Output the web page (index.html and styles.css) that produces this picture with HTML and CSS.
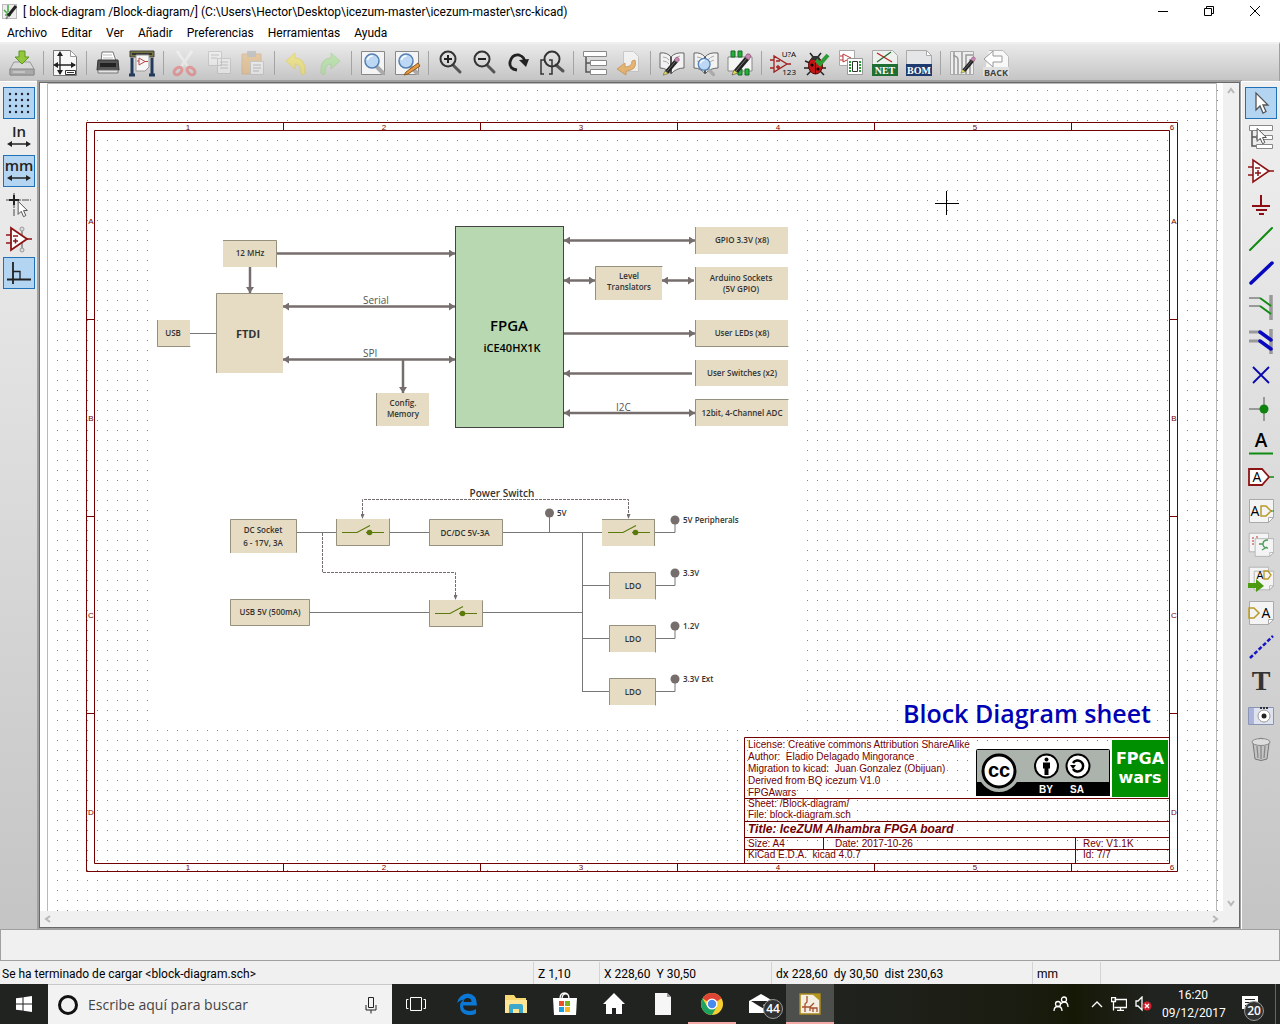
FILE: index.html
```html
<!DOCTYPE html>
<html lang="es">
<head>
<meta charset="utf-8">
<title>[ block-diagram /Block-diagram/]</title>
<meta name="viewport" content="width=device-width, initial-scale=1">
<link rel="stylesheet" href="styles.css">
</head>
<body>
<svg class="defs" aria-hidden="true">
  <defs>
    <symbol id="pencil" viewBox="0 0 26 26"><path d="M7 20 18 7l4 3L11 23z" fill="#222"/><path d="m9 21 11-13" stroke="#777" stroke-width="1"/><path d="m7 20 4 3-6 2z" fill="#e8e050" stroke="#444" stroke-width=".6"/><path d="m18 7 2-3q3-1 4 2l-2 4z" fill="#c986b8" stroke="#745" stroke-width=".6"/></symbol>
    <symbol id="sheet" viewBox="0 0 26 26"><path d="M1.500 1.500h24v18l-5 5h-19z" fill="#f4f4f4" stroke="#aaa"/><path d="M20.500 24.500v-5h5z" fill="#fff" stroke="#aaa"/></symbol>
    <symbol id="arrow" viewBox="0 0 26 26"><path d="M8 3v17l4-4 3 7 3-1.500-3-6.500h5z" fill="#fff" stroke="#555" stroke-width="1.300"/></symbol>
    <symbol id="lens" viewBox="0 0 26 26"><path d="m17 17 6 6" stroke="#aaa" stroke-width="4" stroke-linecap="round"/><circle cx="12" cy="11" r="7" fill="#bcd8f4" stroke="#5580b4" stroke-width="1.500"/><path d="M7.500 10q1-4 5-4" fill="none" stroke="#fff" stroke-width="1.500"/></symbol>
    <symbol id="book" viewBox="0 0 26 26"><path d="M1 3q7-1 11 4 4-5 13-4v15q-8 0-13 6Q8 18 1 18z" fill="#f2f2f2" stroke="#666"/><path d="M12 7v16" stroke="#555" stroke-width="2"/><path d="M4 7q4 0 6 3M4 11q4 0 6 3M21 6q-4 1-6 4M21 10q-4 1-6 4" fill="none" stroke="#aaa"/></symbol>
    <symbol id="span" viewBox="0 0 26 26"><path d="M4 20h18" stroke="#222" stroke-width="1.500"/><path d="m1 20 5-3v6zM25 20l-5-3v6z" fill="#222"/></symbol>
    <symbol id="switch" viewBox="0 0 54 27"><path d="M6 13.500h15l13-7M30 13.500h18" fill="none" stroke="#5c7a0c" stroke-width="1.200"/><circle cx="33.500" cy="13.500" r="2.800" fill="#5c7a0c"/></symbol>
    <marker id="tip" markerUnits="userSpaceOnUse" markerWidth="6" markerHeight="8" refX="6" refY="4" orient="auto-start-reverse"><path d="M0 0l6 4-6 4z" fill="#766e6c"/></marker>
    <marker id="tip-small" markerUnits="userSpaceOnUse" markerWidth="5" markerHeight="4" refX="4" refY="2" orient="auto"><path d="M0 0l5 2-5 2z" fill="#766e6c"/></marker>
    <pattern id="grid" x="2" y="5" width="10" height="10" patternUnits="userSpaceOnUse"><rect x="5" y="5" width="1" height="1" fill="#848484"/></pattern>
  </defs>
</svg>

<header class="titlebar">
  <svg class="app-icon" viewBox="0 0 16 16" aria-hidden="true"><rect x=".5" y=".5" width="14" height="14" fill="#eee" stroke="#bbb"/><path d="M2 6l4 4M6 1v7M3 11h6" stroke="#4a4" stroke-width="1.500"/><path d="M6 12 14 2" stroke="#222" stroke-width="3"/><path d="m6 12-2 3" stroke="#888" stroke-width="2"/></svg>
  <h1>[ block-diagram /Block-diagram/] (C:\Users\Hector\Desktop\icezum-master\icezum-master\src-kicad)</h1>
  <div class="window-buttons">
    <button aria-label="Minimizar"><svg viewBox="0 0 10 10"><path d="M0 5.500h10" stroke="#000"/></svg></button>
    <button aria-label="Restaurar"><svg viewBox="0 0 10 10"><path d="M.5 2.500h7v7h-7zM2.500 2.500v-2h7v7h-2" fill="none" stroke="#000"/></svg></button>
    <button aria-label="Cerrar"><svg viewBox="0 0 10 10"><path d="m0 0 10 10M10 0 0 10" stroke="#000"/></svg></button>
  </div>
</header>

<nav class="menubar">
  <button>Archivo</button><button>Editar</button><button>Ver</button><button>Añadir</button><button>Preferencias</button><button>Herramientas</button><button>Ayuda</button>
</nav>

<div class="toolbar" role="toolbar" aria-label="Principal">
  <button aria-label="Guardar"><svg viewBox="0 0 26 26"><path d="M5 12h16l4 7v6H1v-6z" fill="#d8d8d8" stroke="#999"/><path d="M1 19h24v6H1z" fill="#aaa" stroke="#888"/><path d="M4 22h12" stroke="#ddd"/><path d="M10 1h6v6h4l-7 7-7-7h4z" fill="#94c83c" stroke="#5d9420"/></svg></button>
  <i></i>
  <button aria-label="Ajustes de hoja"><svg viewBox="0 0 26 26"><path d="M1.500.5h17l6 6v19h-23z" fill="#f8f8f8" stroke="#777"/><path d="M18.500.5v6h6z" fill="#fff" stroke="#999"/><path d="M8 3v21M3 15h20" stroke="#222" stroke-width="1.300"/><path d="m8 1-3 5h6zM8 25l-3-5h6zM1 15l5-3v6zM24 15l-5-3v6z" fill="#222"/><path d="M13.500 20.500h10v4h-10zM15 22.500h7" fill="#fff" stroke="#333"/></svg></button>
  <i></i>
  <button aria-label="Imprimir"><svg viewBox="0 0 26 26"><path d="M7 2h11l3 9H6z" fill="#fff" stroke="#777"/><path d="M8 5h9M8 8h10" stroke="#bbb"/><path d="M3 10h20l1 10H2z" fill="#555" stroke="#333"/><path d="M5 13h16v4H5z" fill="#222"/><path d="M3 20h20v3H3z" fill="#e4e4e4" stroke="#777"/></svg></button>
  <button aria-label="Trazar"><svg viewBox="0 0 26 26"><path d="M1 1h24v6H1z" fill="#77763f" stroke="#444"/><path d="M3 4h20" stroke="#333" stroke-width="2"/><path d="M3 8v17M23 8v17M0 25h6M20 25h6" stroke="#243a5c" stroke-width="3"/><path d="M7 5h13v12l-4 4H7z" fill="#f6f6f6" stroke="#999"/><path d="M10 8v7l6-3.500zM8 11h2M16 11.500h3" fill="none" stroke="#b44"/></svg></button>
  <i></i>
  <button disabled aria-label="Cortar"><svg viewBox="0 0 26 26"><path d="m5 1 11 16M20 1 9 17" stroke="#fff" stroke-width="3"/><ellipse cx="6" cy="21" rx="4.500" ry="3" transform="rotate(-40 6 21)" fill="none" stroke="#f04848" stroke-width="3"/><ellipse cx="19" cy="21" rx="4.500" ry="3" transform="rotate(40 19 21)" fill="none" stroke="#f04848" stroke-width="3"/></svg></button>
  <button disabled aria-label="Copiar"><svg viewBox="0 0 26 26"><path d="M2.500 1.500h13v14h-13zM11.500 8.500h13v15h-13z" fill="#fff" stroke="#aaa"/><path d="M5 5h8M5 8h6M14 12h8M14 15h8M14 18h8" stroke="#999"/></svg></button>
  <button disabled aria-label="Pegar"><svg viewBox="0 0 26 26"><path d="M2 4h19v20H2z" fill="#eda84a" stroke="#c48d4c"/><path d="M7 1h9v6H7z" fill="#999"/><path d="M10.500 11.500h13v13h-13z" fill="#fff" stroke="#aaa"/><path d="M13 15h8M13 18h8M13 21h6" stroke="#888"/></svg></button>
  <i></i>
  <button disabled aria-label="Deshacer"><svg viewBox="0 0 26 26"><path d="m3 11 9-8v5q11 0 10 15-4 4-4-1 0-8-6-8v5z" fill="#ffe820" stroke="#e8c800"/></svg></button>
  <button disabled aria-label="Rehacer"><svg viewBox="0 0 26 26"><path d="m23 11-9-8v5Q3 8 4 23q4 4 4-1 0-8 6-8v5z" fill="#90e870" stroke="#80c860"/></svg></button>
  <i></i>
  <button aria-label="Buscar"><svg viewBox="0 0 26 26"><path d="M1.500 1.500h23v23h-23z" fill="#f4f4f4" stroke="#888"/><use href="#lens" width="26" height="26"/></svg></button>
  <button aria-label="Buscar y reemplazar"><svg viewBox="0 0 26 26"><path d="M1.500 1.500h23v23h-23z" fill="#f4f4f4" stroke="#888"/><use href="#lens" width="26" height="26"/><path d="m24 13-12 9-2 3 4-1 12-8z" fill="#e89a40" stroke="#8a5520"/></svg></button>
  <i></i>
  <button aria-label="Acercar"><svg viewBox="0 0 26 26"><path d="m16 15 7 7" stroke="#555" stroke-width="3" stroke-linecap="round"/><circle cx="11" cy="9" r="7.500" fill="none" stroke="#333" stroke-width="2"/><path d="M7 9h8M11 5v8" stroke="#222" stroke-width="2"/></svg></button>
  <button aria-label="Alejar"><svg viewBox="0 0 26 26"><path d="m16 15 7 7" stroke="#555" stroke-width="3" stroke-linecap="round"/><circle cx="11" cy="9" r="7.500" fill="none" stroke="#333" stroke-width="2"/><path d="M7 9h8" stroke="#222" stroke-width="2"/></svg></button>
  <button aria-label="Redibujar"><svg viewBox="0 0 26 26"><path d="M12 20q-8-1-7-8 2-8 9-7 6 2 6 8" fill="none" stroke="#222" stroke-width="2.800"/><path d="m14 10 10-1-3 8z" fill="#222"/></svg></button>
  <button aria-label="Ajustar"><svg viewBox="0 0 26 26"><path d="m17 15 7 6" stroke="#555" stroke-width="3" stroke-linecap="round"/><circle cx="13" cy="9" r="7.500" fill="none" stroke="#333" stroke-width="2"/><path d="M5 10H2v14h3M10 10h3v14h-3" fill="none" stroke="#333" stroke-width="1.500"/></svg></button>
  <i></i>
  <button aria-label="Jerarquía"><svg viewBox="0 0 26 26"><path d="M4 5v17h4M4 13h4" fill="none" stroke="#555" stroke-width="1.500"/><path d="M1.500 1.500h23v5h-23zM8.500 10.500h16v5h-16zM8.500 19.500h16v5h-16z" fill="#fff" stroke="#888"/></svg></button>
  <button aria-label="Salir de hoja"><svg viewBox="0 0 26 26" opacity=".6"><path d="M7.500 1.500h10l5 5v15h-15z" fill="#fff" stroke="#bbb"/><path d="M19 10q3 10-9 11v4L1 19l8-6v4q7 0 7-6z" fill="#f0a030" stroke="#c87820"/></svg></button>
  <i></i>
  <button aria-label="Editor de bibliotecas"><svg viewBox="0 0 26 26"><use href="#book" width="26" height="26"/><use href="#pencil" width="22" height="24" y="3"/></svg></button>
  <button aria-label="Navegador de bibliotecas"><svg viewBox="0 0 26 26"><use href="#book" width="26" height="26"/><use href="#lens" x="1" y="5" width="22" height="22"/></svg></button>
  <button aria-label="Editor de huellas"><svg viewBox="0 0 26 26"><path d="M1 7h24v14H1z" fill="#f4f4f4" stroke="#888"/><path d="M4 1h4v6H4zM11 1h4v6h-4zM11 19h4v6h-4zM18 19h4v6h-4z" fill="#22b036" stroke="#186a28"/><use href="#pencil" width="26" height="26"/></svg></button>
  <i></i>
  <button aria-label="Anotar"><svg viewBox="0 0 26 26"><path d="M4 6v16l13-8zM0 10h4M0 18h4M17 14h4M6 11h4M6 17h4M8 15v4" fill="none" stroke="#a22020" stroke-width="1.300"/><text x="26" y="7" class="glyph">U?A</text><text x="26" y="25" class="glyph">123</text></svg></button>
  <button aria-label="ERC"><svg viewBox="0 0 26 26"><path d="m6 3 4 5M17 3l-4 5M1 11l5 2M0 18h6M3 25l4-4M22 18h-5M20 25l-4-4" stroke="#222" stroke-width="1.500"/><ellipse cx="11.500" cy="15.500" rx="7" ry="8.500" fill="#c41414" stroke="#500"/><path d="M8 6h7l1 4H7z" fill="#333"/><path d="M11.500 10v14" stroke="#400"/><circle cx="8" cy="15" r="1.500"/><circle cx="14" cy="19" r="1.500"/><path d="m12 10 4 4 8-9" fill="none" stroke="#2e9a38" stroke-width="4"/></svg></button>
  <button aria-label="Asociar huellas"><svg viewBox="0 0 26 26"><path d="M1.500.5h15v15h-15z" fill="#fff" stroke="#aaa"/><path d="M5 4v8l8-4zM2 6h3M2 10h3" fill="none" stroke="#b33"/><path d="M9.500 8.500h15v16h-15z" fill="#fff" stroke="#999"/><path d="M14.500 11.500h5v10h-5z" fill="none" stroke="#333"/><path d="M12 11v12M22 11v12" stroke="#22a036" stroke-width="2" stroke-dasharray="2 1"/></svg></button>
  <button aria-label="Lista de redes"><svg viewBox="0 0 26 26"><path d="M.5.5h20l5 5v20H.5z" fill="#eef2ee" stroke="#aaa"/><path d="M5 3 20 12" stroke="#b22" stroke-width="1.300"/><path d="M5 12 19 2" stroke="#2a6a30" stroke-width="1.300"/><path d="M0 14h26v12H0z" fill="#1f6f33"/><text x="13" y="24" class="glyph-slab">NET</text></svg></button>
  <button aria-label="Lista de materiales"><svg viewBox="0 0 26 26"><path d="M.5.5h20l5 5v20H.5z" fill="#e4e6e8" stroke="#aaa"/><path d="M20.500.5v5h5z" fill="#fff" stroke="#aaa"/><path d="M0 14h26v12H0z" fill="#1d3b6e"/><text x="13" y="24" class="glyph-slab">BOM</text></svg></button>
  <i></i>
  <button aria-label="Editor de placas"><svg viewBox="0 0 26 26"><path d="M1.500 1.500h23v23h-23z" fill="#eee" stroke="#aaa"/><path d="M5 2v22M9 24V10q0-4-5-4M13 2v18M17 24V5h7M21 24V9" fill="none" stroke="#999" stroke-width="1.500"/><use href="#pencil" x="8" y="4" width="20" height="20"/></svg></button>
  <button aria-label="Volver"><svg viewBox="0 0 26 26"><path d="M6 .5h14l5.500 6v19H1" fill="#f8f8f8" stroke="#bbb"/><path d="m1 9 9-8v5h9v6h-9v5z" fill="#fff" stroke="#999"/><path d="M0 17h26v9H0z" fill="#e0e0e0"/><text x="13" y="26" class="glyph-back">BACK</text></svg></button>
</div>

<main class="workspace">
  <div class="sidebar" role="toolbar" aria-label="Opciones">
    <button class="on" aria-label="Rejilla"><svg viewBox="0 0 26 26"><path d="M4 4h20M4 10h20M4 16h20M4 22h20" stroke="#223" stroke-width="2.400" stroke-linecap="round" stroke-dasharray="0 6"/></svg></button>
    <button aria-label="Pulgadas"><svg viewBox="0 0 26 26"><text x="13" y="13" class="glyph-unit">In</text><use href="#span" width="26" height="26"/></svg></button>
    <button class="on" aria-label="Milímetros"><svg viewBox="0 0 26 26"><text x="13" y="13" class="glyph-unit">mm</text><use href="#span" width="26" height="26"/></svg></button>
    <button aria-label="Cursor"><svg viewBox="0 0 26 26"><path d="M8 1v24M0 8h25" stroke="#999" stroke-width="2" stroke-dasharray="7 1"/><path d="M8 3v10M3 8h10" stroke="#222" stroke-width="2"/><use href="#arrow" x="6" y="7" width="20" height="20"/></svg></button>
    <button aria-label="Pines ocultos"><svg viewBox="0 0 26 26"><path d="M16 3v21" stroke="#999" stroke-width="2"/><path d="M5 2v22l16-11z" fill="#fff" stroke="#8c1414" stroke-width="1.800"/><path d="M0 9h5M0 17h5M21 13h5M7 10h5M7 15h5M9.500 12.500v5" stroke="#8c1414" stroke-width="1.500"/><circle cx="16" cy="3" r="2" fill="#ddd" stroke="#999"/><circle cx="16" cy="24" r="2" fill="#ddd" stroke="#999"/></svg></button>
    <button class="on" aria-label="Ortogonal"><svg viewBox="0 0 26 26"><path d="M7 2v22M1 19.500h24" stroke="#222" stroke-width="1.800"/><path d="M7 11.500h7v8" fill="none" stroke="#222" stroke-width="1.300"/></svg></button>
  </div>

  <div class="viewport">
    <svg class="sheet" role="img" aria-label="Block Diagram sheet">
      <g transform="translate(-40 -83)">
        <rect x="52" y="88" width="4000" height="4000" fill="url(#grid)"/>
        <path d="M47.500 911V83.500H1216.500V911" class="page-edge"/>
        <rect x="150" y="215" width="655" height="507" fill="#fff"/>

        <g class="frame">
          <path d="M86.500 122.500h1091v749h-1091zM94.500 130.500h1075v733h-1075z"/>
          <path d="M283.500 123v7M480.500 123v7M677.500 123v7M874.500 123v7M1071.500 123v7M283.500 864v7M480.500 864v7M677.500 864v7M874.500 864v7M1071.500 864v7M87 319.500h7M87 516.500h7M87 713.500h7M1170 319.500h7M1170 516.500h7M1170 713.500h7"/>
          <path d="M744.500 863.500v-126h425M744.500 798.500h425M744.500 821.500h425M744.500 837.500h425M744.500 849.500h425M823.500 838v11M1075.500 838v25"/>
        </g>
        <g class="frame-text mid small">
          <text x="188" y="130">1</text><text x="384" y="130">2</text><text x="581" y="130">3</text><text x="778" y="130">4</text><text x="975" y="130">5</text><text x="1172" y="130">6</text>
          <text x="188" y="870">1</text><text x="384" y="870">2</text><text x="581" y="870">3</text><text x="778" y="870">4</text><text x="975" y="870">5</text><text x="1172" y="870">6</text>
          <text x="91" y="224">A</text><text x="91" y="421">B</text><text x="91" y="618">C</text><text x="91" y="815">D</text>
          <text x="1174" y="224">A</text><text x="1174" y="421">B</text><text x="1174" y="618">C</text><text x="1174" y="815">D</text>
        </g>
        <g class="frame-text">
          <text x="748" y="748">License: Creative commons Attribution ShareAlike</text>
          <text x="748" y="760">Author:&#160; Eladio Delagado Mingorance</text>
          <text x="748" y="772">Migration to kicad:&#160; Juan Gonzalez (Obijuan)</text>
          <text x="748" y="784">Derived from BQ icezum V1.0</text>
          <text x="748" y="796">FPGAwars</text>
          <text x="748" y="807">Sheet: /Block-diagram/</text>
          <text x="748" y="818">File: block-diagram.sch</text>
          <text x="748" y="833" class="sheet-title">Title: IceZUM Alhambra FPGA board</text>
          <text x="748" y="847">Size: A4</text>
          <text x="835" y="847">Date: 2017-10-26</text>
          <text x="1083" y="847">Rev: V1.1K</text>
          <text x="748" y="858">KiCad E.D.A.&#160; kicad 4.0.7</text>
          <text x="1083" y="858">Id: 7/7</text>
        </g>
        <text x="1027" y="723" class="sheet-name">Block Diagram sheet</text>

        <g>
          <rect x="976.500" y="749.500" width="133" height="46" rx="1" fill="#abb3ac" stroke="#000"/>
          <path d="M976 782h134v14H976z"/>
          <circle cx="999" cy="771" r="21" fill="#abb3ac"/>
          <path d="M976 792h46v4h-46z"/>
          <circle cx="999" cy="771" r="16" fill="#fff" stroke="#000" stroke-width="3"/>
          <text x="999" y="777" class="cc">cc</text>
          <circle cx="1046.500" cy="766" r="11.500" fill="#fff" stroke="#000" stroke-width="2"/>
          <circle cx="1046.500" cy="759.500" r="2"/><path d="M1043 762.500h7v6h-1.500v6.500h-4v-6.500h-1.500z"/>
          <circle cx="1078" cy="766" r="11.500" fill="#fff" stroke="#000" stroke-width="2"/>
          <path d="M1073 763a5.500 5.500 0 1 1 0 6" fill="none" stroke="#000" stroke-width="2.500"/><path d="m1070 765 6 0-3 4z"/>
          <text x="1046" y="793" class="cc-label">BY</text><text x="1077" y="793" class="cc-label">SA</text>
          <path d="M1112 740h56v57h-56z" fill="#008f00"/>
          <text x="1140" y="764" class="wars">FPGA</text><text x="1140" y="783" class="wars">wars</text>
        </g>

        <g class="block">
          <path d="M223 240h54v27h-54zM216 293h67v80h-67zM157 320h33v27h-33zM376 393h53v33h-53zM695 227h93v27h-93zM595 266h67v34h-67zM695 267h93v33h-93zM695 320h93v27h-93zM695 360h93v26h-93zM695 399h93v27h-93z"/>
          <path d="M230 519h67v34h-67zM336 519h54v27h-54zM429 519h74v27h-74zM602 519h53v27h-53zM609 572h47v27h-47zM609 625h47v27h-47zM609 678h47v27h-47zM230 599h80v27h-80zM429 600h54v27h-54z"/>
        </g>
        <path class="edges" d="M223 240.500h53.500v27M216.500 373v-79.500h66.500M157.500 320v26.500h33M376.500 426v-33M695.500 254v-27M595.500 300v-33.500h67M695.500 300v-33M695.500 320v26.500h93M695.500 360v26M695.500 426v-26.500h93M230.500 553v-33.500h66v33M336.500 519v26.500h53v-27M429.500 546v-26.500h73v26h-73M602 519.500h53M654.500 519v27M609.500 599v-26.500h46v27M609.500 652v-26.500h46v27M609.500 705v-26.500h46v27M230.500 599.500h79v26h-79zM429.500 600v26.500h53v-26"/>
        <rect x="455.500" y="226.500" width="108" height="201" fill="#b7d8b1" stroke="#444"/>

        <g class="wire thick">
          <path d="M277 253.500H455" marker-end="url(#tip)"/>
          <path d="M250 267V293" marker-end="url(#tip)"/>
          <path class="both" d="M283 306.500H455"/>
          <path class="both" d="M283 359.500H455"/>
          <path d="M403 360V393" marker-end="url(#tip)"/>
          <path class="both" d="M564 240.500H695"/>
          <path class="both" d="M564 280.500H595"/>
          <path class="both" d="M662 280.500H694"/>
          <path d="M564 333.500H695" marker-end="url(#tip)"/>
          <path d="M692 373.500H564" marker-end="url(#tip)"/>
          <path class="both" d="M564 413H695"/>
        </g>
        <path class="wire" d="M190 333.500h26M297 532.500h39M390 532.500h39M503 532.500h99M549.500 513v19M582.500 533v159M655 532.500h20v-13M582 585.500h27M656 585.500h19v-13M582 638.500h27M656 638.500h19v-13M582 691.500h27M656 691.500h19v-13M310 612.500h119M483 612.500h99"/>
        <g fill="#766e6c"><circle cx="549.500" cy="513" r="4.500"/><circle cx="675" cy="520" r="4.500"/><circle cx="675" cy="573" r="4.500"/><circle cx="675" cy="626" r="4.500"/><circle cx="675" cy="679" r="4.500"/></g>
        <g class="wire dashed">
          <path d="M495 499.500H362.500V518" marker-end="url(#tip-small)"/><path d="M495 499.500H628.500V518" marker-end="url(#tip-small)"/>
          <path d="M322.500 533v39.500h133V599" marker-end="url(#tip-small)"/>
        </g>
        <use href="#switch" x="336" y="519" width="54" height="27"/><use href="#switch" x="602" y="519" width="54" height="27"/><use href="#switch" x="429" y="600" width="54" height="27"/>

        <g class="label mid">
          <text x="250" y="256">12 MHz</text><text x="173" y="336">USB</text>
          <text x="403" y="406">Config.</text><text x="403" y="417">Memory</text>
          <text x="742" y="243">GPIO 3.3V (x8)</text>
          <text x="629" y="279">Level</text><text x="629" y="290">Translators</text>
          <text x="741" y="281">Arduino Sockets</text><text x="741" y="292">(5V GPIO)</text>
          <text x="742" y="336">User LEDs (x8)</text><text x="742" y="376">User Switches (x2)</text><text x="742" y="416">12bit, 4-Channel ADC</text>
          <text x="263" y="533">DC Socket</text><text x="263" y="546">6 - 17V, 3A</text>
          <text x="465" y="536">DC/DC 5V-3A</text><text x="270" y="615">USB 5V (500mA)</text>
          <text x="633" y="589">LDO</text><text x="633" y="642">LDO</text><text x="633" y="695">LDO</text>
          <text x="248" y="338" class="name">FTDI</text>
          <text x="502" y="497" class="heading">Power Switch</text>
          <text x="509" y="331" class="chip">FPGA</text><text x="512" y="352" class="model">iCE40HX1K</text>
        </g>
        <g class="label">
          <text x="557" y="516">5V</text><text x="683" y="523">5V Peripherals</text><text x="683" y="576">3.3V</text><text x="683" y="629">1.2V</text><text x="683" y="682">3.3V Ext</text>
          <text x="363" y="304" class="bus">Serial</text><text x="363" y="357" class="bus">SPI</text><text x="616" y="411" class="bus">I2C</text>
        </g>
        <path d="M935 203.500h24M946.500 191v24" stroke="#000"/>
      </g>
    </svg>
    <div class="scroll vertical">
      <button aria-label="Arriba"><svg viewBox="0 0 8 8"><path d="m1 6 3-4 3 4" /></svg></button>
      <button aria-label="Abajo"><svg viewBox="0 0 8 8"><path d="m1 2 3 4 3-4" /></svg></button>
    </div>
    <div class="scroll horizontal">
      <button aria-label="Izquierda"><svg viewBox="0 0 8 8"><path d="M6 1 2 4l4 3" /></svg></button>
      <button aria-label="Derecha"><svg viewBox="0 0 8 8"><path d="m2 1 4 3-4 3" /></svg></button>
    </div>
  </div>

  <div class="sidebar" role="toolbar" aria-label="Herramientas de dibujo">
    <button class="on" aria-label="Seleccionar"><svg viewBox="0 0 26 26"><use href="#arrow" width="26" height="26"/></svg></button>
    <button aria-label="Navegar jerarquía"><svg viewBox="0 0 26 26"><path d="M4 5v17h4M4 13h4" fill="none" stroke="#555" stroke-width="1.500"/><path d="M1.500 1.500h23v5h-23zM8.500 11.500h16v4h-16zM8.500 20.500h16v4h-16z" fill="#fff" stroke="#888"/><use href="#arrow" x="2" y="2" width="22" height="20"/></svg></button>
    <button aria-label="Componente"><svg viewBox="0 0 26 26"><path d="M5 2v22l16-11z" fill="#fff" stroke="#8c1414" stroke-width="1.600"/><path d="M0 9h5M0 17h5M21 13h5M7 10h5M7 15h6M10 12v6" stroke="#8c1414" stroke-width="1.500"/></svg></button>
    <button aria-label="Alimentación"><svg viewBox="0 0 26 26"><path d="M13 3v11M4 14h18M8 18h11M11 22h5" stroke="#8c0d14" stroke-width="2"/></svg></button>
    <button aria-label="Hilo"><svg viewBox="0 0 26 26"><path d="M2 24 24 2" stroke="#118a11" stroke-width="2" stroke-linecap="round"/></svg></button>
    <button aria-label="Bus"><svg viewBox="0 0 26 26"><path d="M3 23 24 3" stroke="#0808c0" stroke-width="3.500" stroke-linecap="round"/></svg></button>
    <button aria-label="Entrada a bus"><svg viewBox="0 0 26 26"><path d="M1 4h11M1 12h11" stroke="#999" stroke-width="2"/><path d="M23 1v25" stroke="#999" stroke-width="3.500"/><path d="m12 4 11 8M12 12l11 8" stroke="#118a11" stroke-width="2"/></svg></button>
    <button aria-label="Entrada bus a bus"><svg viewBox="0 0 26 26"><path d="M1 4h11M1 13h11" stroke="#999" stroke-width="3"/><path d="M23 1v25" stroke="#999" stroke-width="3.500"/><path d="m12 4 11 8M12 13l11 8" stroke="#0808c0" stroke-width="3.500" stroke-linecap="round"/></svg></button>
    <button aria-label="No conexión"><svg viewBox="0 0 26 26"><path d="m5 5 16 16M21 5 5 21" stroke="#0808b0" stroke-width="1.800"/></svg></button>
    <button aria-label="Unión"><svg viewBox="0 0 26 26"><path d="M1 13h15M16 1v24" stroke="#999" stroke-width="2"/><circle cx="16" cy="13" r="4.500" fill="#0d820d"/></svg></button>
    <button aria-label="Etiqueta"><svg viewBox="0 0 26 26"><text x="13" y="17" class="glyph-a">A</text><path d="M1 23.500h24" stroke="#118a11" stroke-width="2"/></svg></button>
    <button aria-label="Etiqueta global"><svg viewBox="0 0 26 26"><path d="M1 5h13l7 8-7 8H1z" fill="#fff" stroke="#8c1414" stroke-width="1.800"/><path d="M21 13h5" stroke="#118a11" stroke-width="1.500"/><text x="9" y="18" class="glyph-b">A</text></svg></button>
    <button aria-label="Etiqueta jerárquica"><svg viewBox="0 0 26 26"><use href="#sheet" width="26" height="26"/><text x="7" y="18" class="glyph-b">A</text><path d="M13 8h5l5 5-5 5h-5z" fill="none" stroke="#b89a28" stroke-width="1.500"/><path d="M23 13h3" stroke="#118a11"/></svg></button>
    <button aria-label="Hoja jerárquica"><svg viewBox="0 0 26 26"><use href="#sheet" width="21" height="21"/><path d="M5 5v8M9 4v7" stroke="#b33" stroke-dasharray="2 1"/><use href="#sheet" x="6" y="5" width="20" height="21"/><path d="M20 8q-5 0-5 4 0 4 5 4M11 12h4M14 18l5-3" fill="none" stroke="#4a9a58" stroke-width="1.300"/></svg></button>
    <button aria-label="Importar etiqueta"><svg viewBox="0 0 26 26"><use href="#sheet" width="21" height="21"/><use href="#sheet" x="5" y="3" width="21" height="23"/><text x="12" y="13" class="glyph-s">A</text><path d="M16 5h4l3 4-3 4h-4z" fill="none" stroke="#b89a28" stroke-width="1.300"/><path d="M0 17h8v-4l8 7-8 6v-4H0z" fill="#4c9a10"/></svg></button>
    <button aria-label="Pin de hoja"><svg viewBox="0 0 26 26"><use href="#sheet" width="26" height="26"/><text x="18" y="18" class="glyph-b">A</text><path d="M1 8h5l5 5-5 5H1z" fill="none" stroke="#b89a28" stroke-width="1.500"/></svg></button>
    <button aria-label="Línea"><svg viewBox="0 0 26 26"><path d="M2 24 25 2" stroke="#1515c8" stroke-width="2.500" stroke-dasharray="4 2"/></svg></button>
    <button aria-label="Texto"><svg viewBox="0 0 26 26"><text x="13" y="22" class="glyph-t">T</text></svg></button>
    <button aria-label="Imagen"><svg viewBox="0 0 26 26"><path d="M.5 5.500h25v17H.5z" fill="#dfe3f0" stroke="#8c94b4"/><path d="M1 6h5v16H1z" fill="#aab4dc"/><circle cx="16" cy="14" r="6" fill="#fff" stroke="#999"/><circle cx="16" cy="14" r="2.500" fill="#222"/><path d="M12 6h8" stroke="#333" stroke-width="2" stroke-dasharray="2 1"/></svg></button>
    <button aria-label="Eliminar"><svg viewBox="0 0 26 26"><path d="M5 7h16l-2 16q-6 3-12 0z" fill="#c4c4c4" stroke="#777"/><path d="m9 10 1 12M13 10v13M17 10l-1 12" stroke="#888" stroke-width="1.300"/><ellipse cx="13" cy="6" rx="9" ry="3.500" fill="#ddd" stroke="#888"/><path d="M11 3q2-2 4 0" fill="none" stroke="#888"/></svg></button>
  </div>
</main>

<section class="messages" aria-label="Mensajes"></section>

<footer class="statusbar">
  <span>Se ha terminado de cargar &lt;block-diagram.sch&gt;</span><span>Z 1,10</span><span>X 228,60&#160; Y 30,50</span><span>dx 228,60&#160; dy 30,50&#160; dist 230,63</span><span>mm</span><span></span>
</footer>

<div class="taskbar">
  <button class="start" aria-label="Inicio"><svg viewBox="0 0 16 16" width="16" height="16"><path d="M0 2.300 6.500 1.400V7.500H0zM7.500 1.200 16 0v7.500H7.500zM0 8.500h6.500v6.100L0 13.700zM7.500 8.500H16V16l-8.500-1.200z" fill="#fff"/></svg></button>
  <label class="search">
    <svg viewBox="0 0 22 22" width="22" height="22" aria-hidden="true"><circle cx="11" cy="11" r="8.500" fill="none" stroke="#111" stroke-width="3"/></svg>
    <input type="text" placeholder="Escribe aquí para buscar" aria-label="Buscar">
    <svg viewBox="0 0 12 18" width="12" height="18" aria-hidden="true"><path d="M3.500 1.500h5v10h-5zM1 9v5h10V9M6 14v3.500" fill="none" stroke="#222"/></svg>
  </label>
  <div class="tasks">
    <button aria-label="Vista de tareas"><svg viewBox="0 0 20 16" width="20" height="16"><path d="M4.500 1.500h11v13h-11zM2.500 3.500H.5v9h2M17.500 3.500h2v9h-2" fill="none" stroke="#fff"/></svg></button>
    <button aria-label="Edge"><svg viewBox="0 0 22 22" width="22" height="22"><path d="M1 10Q3 1 12 .5q9 .5 9 12H7q0 5 6.500 5.500 4 0 6.500-2v4.500q-3 2-8 1.500-8-1-8-9 0-4 4-6.500Q3.500 7 1 10zm6.500-1h8q0-4-4-4-3.500 0-4 4z" fill="#0a78d4"/></svg></button>
    <button aria-label="Explorador"><svg viewBox="0 0 22 20" width="22" height="20"><path d="M0 1h9l2 3h10v14H0z" fill="#f8d870"/><path d="M0 6h22v13H0z" fill="#ffe694"/><path d="M4 19v-7q0-2 2-2h10q2 0 2 2v7h-4v-4H8v4z" fill="#3ba8cc"/></svg></button>
    <button aria-label="Tienda"><svg viewBox="0 0 24 24" width="24" height="24"><path d="M0 6h24l-1 17H1z" fill="#fff"/><path d="M7 7q0-6 4.500-6T16 7M9 7q0-6 5-5" fill="none" stroke="#fff" stroke-width="1.300"/><path d="M6 9h5v5H6z" fill="#e8502a"/><path d="M12 9h5v5h-5z" fill="#7ab51d"/><path d="M6 15h5v5H6z" fill="#1a9fe0"/><path d="M12 15h5v5h-5z" fill="#f8b820"/></svg></button>
    <button aria-label="Casa"><svg viewBox="0 0 24 22" width="24" height="22"><path d="m12 0 11 11h-3v10h-6v-6h-4v6H4V11H1z" fill="#fff"/></svg></button>
    <button aria-label="Documento"><svg viewBox="0 0 18 22" width="18" height="22"><path d="M1 0h12l4 4v18H1z" fill="#f6f6f6"/><path d="M13 0v4h4z" fill="#999"/></svg></button>
    <button class="running" aria-label="Chrome"><svg viewBox="0 0 22 22" width="22" height="22"><circle cx="11" cy="11" r="11" fill="#f8cf30"/><path d="M11 11 1.500 5.500A11 11 0 0 1 20.500 5.500z" fill="#de4436"/><path d="M1.500 5.500A11 11 0 0 0 11 22l4.500-8-9 0z" fill="#1da25f"/><circle cx="11" cy="11" r="5.500" fill="#fff"/><circle cx="11" cy="11" r="4.200" fill="#4a8af0"/></svg></button>
    <button aria-label="Correo"><svg viewBox="0 0 24 20" width="24" height="20"><path d="m0 7 12-7 12 7v12H0z" fill="#fff"/><path d="m2 7 20 0-8 4 5 6-9-5z" fill="#20231f"/></svg><b class="badge">44</b></button>
    <button class="running active" aria-label="KiCad"><svg viewBox="0 0 22 22" width="22" height="22"><path d="M1 1h20v20H1z" fill="#f4efe2" stroke="#a88a1c" stroke-width="1.500"/><path d="M13 1h8v7z" fill="#b8961c"/><path d="M8 3v6l-2 2v8M3 14h8l4-4M11 18v-3h7v4M14 19v-4" fill="none" stroke="#a8502c" stroke-width="1.300"/></svg></button>
  </div>
  <div class="tray">
    <button aria-label="Contactos"><svg viewBox="0 0 16 16" width="16" height="16"><circle cx="11" cy="3.500" r="2.500"/><circle cx="5" cy="8" r="2.500"/><path d="M1 15q0-4.500 4-4.500T9 15M8 8q1-2 3-2 4 0 4 5"/></svg></button>
    <button aria-label="Iconos ocultos"><svg viewBox="0 0 12 8" width="12" height="8"><path d="m1 7 5-5 5 5"/></svg></button>
    <button aria-label="Red"><svg viewBox="0 0 16 14" width="16" height="14"><path d="M3.500 2.500h12v8h-12M9.500 11v2M6 13.500h7M.5.500h4v4h-4zM2.500 4.500v9"/></svg></button>
    <button aria-label="Volumen"><svg viewBox="0 0 18 16" width="18" height="16"><path d="M1 5h2l4-4v13L3 10H1z"/><circle cx="12" cy="10" r="4.500" fill="#d02030" stroke="none"/><path d="m10 8 4 4M14 8l-4 4"/></svg></button>
  </div>
  <time class="clock"><span>16:20</span><span>09/12/2017</span></time>
  <button class="notify" aria-label="Notificaciones"><svg viewBox="0 0 16 16" width="16" height="16"><path d="M0 0h16v13H8l-4 3v-3H0z" fill="#fff"/><path d="M3 3.500h10M3 6.500h10M3 9.500h6" stroke="#222"/></svg><b class="badge">20</b></button>
</div>
</body>
</html>
```
FILE: styles.css
```css
* { box-sizing: border-box; }

body {
  margin: 0;
  height: 100vh;
  display: flex;
  flex-direction: column;
  overflow: hidden;
  background: #f0f0f0;
  color: #000;
  font: 12px/16px Roboto, "Open Sans", sans-serif;
}

button {
  margin: 0;
  padding: 0;
  border: 0;
  background: none;
  font: inherit;
  color: inherit;
}

svg { display: block; }
.defs { position: absolute; width: 0; height: 0; }

/* window chrome */
.titlebar {
  display: flex;
  align-items: center;
  height: 24px;
  padding-left: 2px;
  background: #fff;
}
.app-icon { width: 16px; height: 16px; }
.titlebar h1 {
  flex: 1;
  min-width: 0;
  margin: 0 0 0 5px;
  font-size: 12px;
  font-weight: 400;
  white-space: nowrap;
  overflow: hidden;
}
.window-buttons { display: flex; align-self: flex-start; margin-right: 2px; }
.window-buttons button {
  display: grid;
  place-items: center;
  width: 46px;
  height: 21px;
}
.window-buttons svg { width: 10px; height: 10px; }

.menubar {
  display: flex;
  height: 18px;
  background: #fff;
}
.menubar button { padding: 0 7px; }

.toolbar {
  display: flex;
  align-items: center;
  height: 39px;
  padding-left: 5px;
  border-top: 2px solid #f0f0f0;
  border-right: 1px solid #a0a0a0;
  background: linear-gradient(#eaeaea, #c4c4c4);
}
.toolbar button {
  display: grid;
  place-items: center;
  flex: none;
  width: 34px;
  height: 34px;
}
.toolbar svg { width: 26px; height: 26px; overflow: visible; }
.toolbar button:disabled { opacity: .4; }
.toolbar i {
  flex: none;
  width: 1px;
  height: 24px;
  margin: 0 4px;
  background: #a4a4a4;
}

.workspace {
  flex: 1;
  min-height: 0;
  display: flex;
}
.sidebar {
  flex: none;
  display: flex;
  flex-direction: column;
  align-items: center;
  gap: 2px;
  width: 37px;
  padding-top: 5px;
  border-top: 1px solid #fff;
  background: linear-gradient(#f0f0f0, #c4c4c4);
}
.sidebar:last-child { width: 39px; border-left: 1px solid #fff; }
.sidebar button {
  display: grid;
  place-items: center;
  width: 32px;
  height: 32px;
  border: 1px solid transparent;
}
.sidebar .on { border-color: #1f72b8; background: #b3d5f2; }
.sidebar svg { width: 26px; height: 26px; overflow: visible; }

.glyph { font: 8px "Open Sans", sans-serif; text-anchor: end; }
.glyph-slab { font: bold 10px "Liberation Serif", serif; fill: #fff; text-anchor: middle; }
.glyph-back { font: bold 9px "Open Sans", sans-serif; fill: #444; text-anchor: middle; }
.glyph-unit { font: 600 15px "Open Sans", sans-serif; fill: #222; text-anchor: middle; }
.glyph-a { font: 600 19px "Open Sans", sans-serif; text-anchor: middle; }
.glyph-b { font: 14px "Open Sans", sans-serif; text-anchor: middle; }
.glyph-s { font: 11px "Open Sans", sans-serif; text-anchor: middle; }
.glyph-t { font: bold 28px "Liberation Serif", serif; fill: #333; text-anchor: middle; }

/* schematic */
.viewport {
  flex: 1;
  min-width: 0;
  display: grid;
  grid-template-columns: minmax(0, 1fr) 16px;
  grid-template-rows: minmax(0, 1fr) 16px;
  margin: 1px 1px 1px 2px;
  border: 1px solid #696969;
  outline: 2px solid #a0a0a0;
  background: #f0f0f0;
}
.sheet { width: 100%; height: 100%; background: #fff; }
.scroll { display: flex; justify-content: space-between; background: #f0f0f0; }
.scroll button { display: grid; place-items: center; width: 16px; height: 16px; }
.scroll svg { width: 8px; height: 8px; fill: none; stroke: #b8b8b8; stroke-width: 2; }
.vertical { flex-direction: column; }

.page-edge { fill: none; stroke: #b8b8b8; }
.frame { fill: none; stroke: #720000; }
.frame-text { font: 10px "Liberation Sans", sans-serif; fill: #720000; }
.small { font-size: 8px; }
.mid { text-anchor: middle; }
.sheet-title { font-size: 12px; font-weight: bold; font-style: italic; }
.sheet-name { font: 600 25px "Open Sans", sans-serif; fill: #0000b4; text-anchor: middle; }

.cc { font: bold 20px "Liberation Sans", sans-serif; text-anchor: middle; }
.cc-label { font: bold 10px "Liberation Sans", sans-serif; fill: #fff; text-anchor: middle; }
.wars { font: bold 16px "DejaVu Sans", sans-serif; fill: #fff; text-anchor: middle; }

.block { fill: #e5dcc3; }
.edges { fill: none; stroke: #96907f; }
.wire { fill: none; stroke: #777; }
.thick { stroke: #766e6c; stroke-width: 2.5; }
.both { marker-start: url(#tip); marker-end: url(#tip); }
.dashed { stroke: #766e6c; stroke-dasharray: 3 1; }
.label { font: 600 8px "Open Sans", sans-serif; fill: #333; }
.bus { font-size: 10px; font-weight: 400; fill: #555; }
.name { font-size: 11px; font-weight: 700; }
.heading { font-size: 10px; }
.chip { font-size: 15px; fill: #000; }
.model { font-size: 11px; fill: #000; }

/* message panel and status bar */
.messages {
  height: 32px;
  border: 1px solid #a0a0a0;
}
.statusbar {
  display: grid;
  grid-template-columns: minmax(0, 1fr) 66px 172px 261px 68px 180px;
  height: 23px;
  padding-top: 1px;
}
.statusbar span {
  padding: 4px 0 0 4px;
  border-left: 1px solid #d4d4d4;
  white-space: nowrap;
}
.statusbar span:first-child { padding-left: 2px; border-left: 0; }

/* taskbar */
.taskbar {
  display: flex;
  height: 40px;
  background: linear-gradient(90deg, #20231f 64%, #1a1c10 80%, #161806 84%, #20231f 90%);
  color: #fff;
}
.taskbar button { display: grid; place-items: center; position: relative; }
.start { flex: none; width: 48px; }
.search {
  display: flex;
  align-items: center;
  width: 344px;
  padding: 0 15px 0 9px;
  border-top: 1px solid #c8c8c8;
  background: #f2f2f2;
}
.search input {
  flex: 1;
  min-width: 0;
  margin-left: 9px;
  padding: 0;
  border: 0;
  outline: 0;
  background: none;
  font: 14px "Open Sans", sans-serif;
}
.search input::placeholder { color: #444; opacity: 1; }
.tasks { flex: 1; display: flex; gap: 1px; }
.tasks button { width: 48px; border: 0 solid transparent; border-width: 2px 0; }
.tasks button:first-child { margin-right: 2px; }
.tasks .running { border-bottom-color: #f4aaa6; }
.tasks .active { background: #4d4f4d; }
.badge {
  position: absolute;
  right: 2px;
  bottom: 3px;
  width: 20px;
  height: 20px;
  border: 1px solid #999;
  border-radius: 50%;
  background: #333;
  font: 600 12px/18px "Open Sans", sans-serif;
  text-align: center;
}
.notify .badge { right: 11px; }
.tray { display: flex; align-items: center; gap: 8px; margin-right: 9px; }
.tray svg { fill: none; stroke: #fff; stroke-width: 1.3; }
.tray button:first-child { margin-right: 14px; }
.clock {
  display: flex;
  flex-direction: column;
  justify-content: center;
  width: 62px;
  line-height: 18px;
  text-align: center;
}
.notify { width: 52px; margin-right: 4px; border-right: 1px solid #666; }
```
